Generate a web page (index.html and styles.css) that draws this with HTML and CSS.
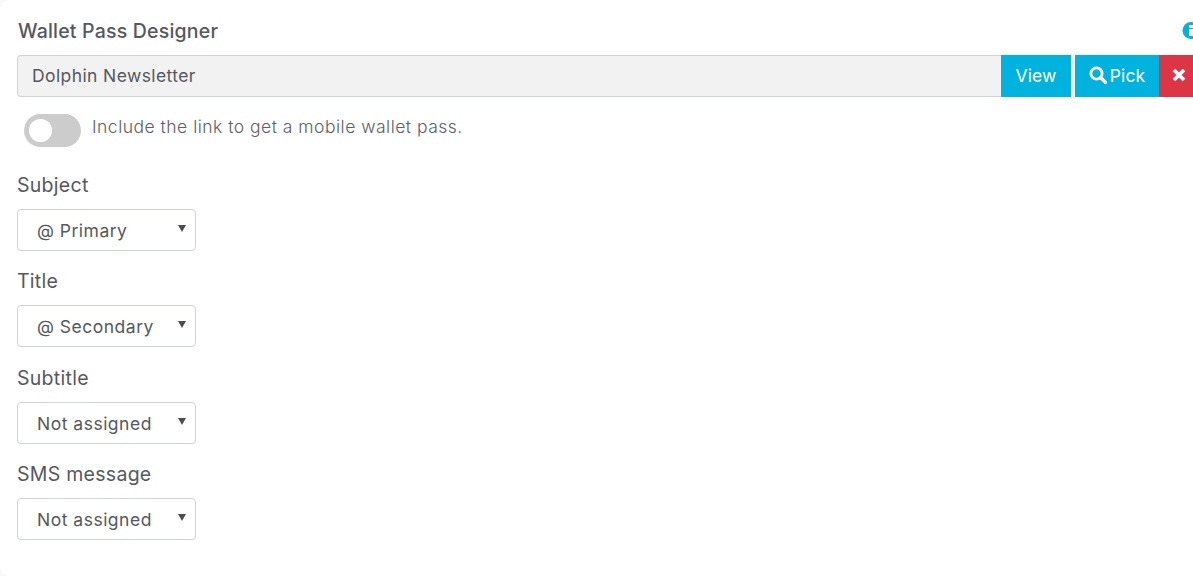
FILE: index.html
```html
<!DOCTYPE html>
<html lang="en">
<head>
<meta charset="utf-8">
<title>Wallet Pass Designer</title>
<link rel="stylesheet" href="styles.css">
</head>
<body>
<main class="card">
  <div class="head">
    <h2 class="title">Wallet Pass Designer</h2>
    <svg class="info" width="20" height="20" viewBox="0 0 20 20"><circle cx="10" cy="9.5" r="8.5" fill="#06b1dd"/><rect x="8" y="4" width="4" height="3" fill="#fff"/><rect x="8" y="8" width="4" height="7" fill="#fff"/></svg>
  </div>
  <div class="picker">
    <input class="picked" type="text" value="Dolphin Newsletter" readonly>
    <button class="btn view">View</button>
    <button class="btn pick"><svg width="18" height="18" viewBox="0 0 18 18"><circle cx="7.5" cy="7.5" r="5.6" fill="none" stroke="#fff" stroke-width="2.8"/><path d="M11.8 11.8L16.4 16.4" stroke="#fff" stroke-width="3.4" stroke-linecap="round"/></svg>Pick</button>
    <button class="btn clear"><svg width="14" height="14" viewBox="0 0 14 14"><path d="M2 2L12 12M12 2L2 12" stroke="#fff" stroke-width="3.8"/></svg></button>
  </div>
  <div class="toggle-row">
    <span class="toggle"><span class="knob"></span></span>
    <span class="toggle-text">Include the link to get a mobile wallet pass.</span>
  </div>
  <div class="field first">
    <label class="label">Subject</label>
    <div class="select"><span>@ Primary</span></div>
  </div>
  <div class="field">
    <label class="label">Title</label>
    <div class="select"><span>@ Secondary</span></div>
  </div>
  <div class="field third">
    <label class="label">Subtitle</label>
    <div class="select"><span>Not assigned</span></div>
  </div>
  <div class="field">
    <label class="label">SMS message</label>
    <div class="select"><span>Not assigned</span></div>
  </div>
</main>
</body>
</html>
```
FILE: styles.css
```css
* { box-sizing: border-box; }
html, body { margin: 0; height: 100%; }
body {
  background: #f7f7f7;
  overflow: hidden;
  font-family: "Inter", "Liberation Sans", sans-serif;
  color: #55585f;
}
.card {
  width: 1220px;
  height: 100%;
  background: #fff;
  border-radius: 9px;
  padding: 19px 0 0 17px;
}
.head {
  display: flex;
  justify-content: space-between;
  align-items: center;
  height: 24px;
  width: 1184px;
}
.title {
  margin: 0 0 0 1px;
  font-size: 19.5px;
  font-weight: 500;
  line-height: 24px;
  letter-spacing: 0.2px;
}
.picker {
  display: flex;
  margin-top: 12px;
  height: 42px;
  width: 1203px;
}
.picked {
  width: 984px;
  height: 42px;
  border: 1px solid #ced4da;
  border-right: 0;
  border-radius: 4px 0 0 4px;
  background: #f2f2f2;
  padding: 0 14px 2px;
  font: 400 17.5px "Inter", "Liberation Sans", sans-serif;
  letter-spacing: 0.4px;
  color: #55585f;
  outline: none;
}
.btn {
  border: 0;
  height: 42px;
  color: #fff;
  font: 400 17.5px "Inter", "Liberation Sans", sans-serif;
  letter-spacing: 0.1px;
  display: flex;
  align-items: center;
  justify-content: center;
  padding: 0 0 2px;
}
.view { width: 70px; background: #00b2de; margin-right: 4px; }
.pick { width: 84px; background: #00b2de; gap: 3px; }
.clear { width: 44px; background: #dc3545; justify-content: flex-start; padding-left: 13px; }
.toggle-row {
  display: flex;
  align-items: center;
  margin: 17px 0 0 7px;
  height: 33px;
}
.toggle {
  width: 57px;
  height: 33px;
  border-radius: 17px;
  background: #cccccc;
  display: flex;
  align-items: center;
  padding-left: 5px;
}
.knob { width: 23px; height: 23px; border-radius: 50%; background: #fff; }
.toggle-text {
  margin: 0 0 8px 11px;
  font-size: 17.5px;
  font-weight: 300;
  letter-spacing: 0.49px;
  color: #5d6067;
}
.field { margin-top: 18px; }
.field.first { margin-top: 26px; }
.field.third { margin-top: 19px; }
.label {
  display: block;
  height: 24px;
  line-height: 24px;
  font-size: 19.5px;
  font-weight: 400;
  letter-spacing: 0.28px;
  margin-bottom: 12px;
}
.select {
  position: relative;
  width: 179px;
  height: 42px;
  border: 1px solid #ced4da;
  border-radius: 4px;
  background: #fff;
  display: flex;
  align-items: center;
  padding-left: 19px;
  font-size: 17.5px;
  letter-spacing: 0.5px;
  color: #55585f;
}
.select::after {
  content: "";
  position: absolute;
  right: 9px;
  top: 15px;
  border-left: 4px solid transparent;
  border-right: 4px solid transparent;
  border-top: 7px solid #4a4d52;
}
```
